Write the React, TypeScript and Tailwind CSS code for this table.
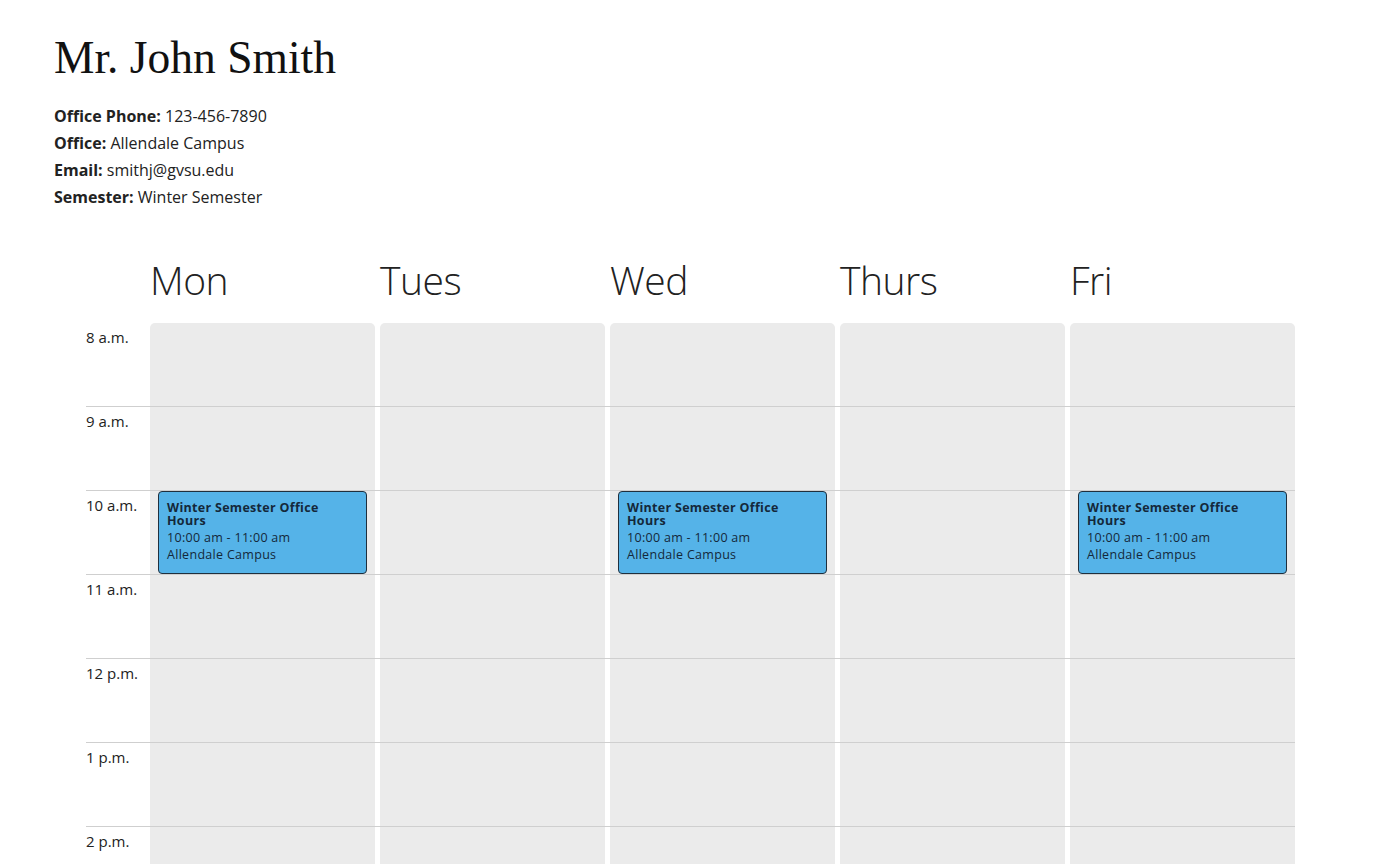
import React from 'react';

const days = ['Mon', 'Tues', 'Wed', 'Thurs', 'Fri'];
const hours = ['8 a.m.', '9 a.m.', '10 a.m.', '11 a.m.', '12 p.m.', '1 p.m.', '2 p.m.'];

// office hours: day index -> hour index
const events = [
  { day: 0, hour: 2 },
  { day: 2, hour: 2 },
  { day: 4, hour: 2 },
];

const EventCard = () => (
  <div className="h-full rounded-[4px] border border-[#1f2f3d] bg-[#55b3e8] px-2 pt-[9px] text-[#14283a]">
    <p className="text-[12.5px] font-bold leading-[13px] tracking-[0.3px]">Winter Semester Office Hours</p>
    <p className="mt-[2px] text-[12.5px] leading-[17px] tracking-[0.3px]">10:00 am - 11:00 am</p>
    <p className="text-[12.5px] leading-[17px] tracking-[0.3px]">Allendale Campus</p>
  </div>
);

export default function App() {
  return (
    <div className="min-h-screen bg-white text-[#222] font-['Open_Sans',sans-serif]">
      <div className="px-[54px] pt-[30px]">
        <h1 className="text-[45.5px] leading-[56px] text-[#111] font-['Liberation_Serif',serif]">Mr. John Smith</h1>
        <div className="mt-[17px] text-[16px] leading-[27px]">
          <p><b>Office Phone:</b> 123-456-7890</p>
          <p><b>Office:</b> Allendale Campus</p>
          <p><b>Email:</b> smithj@gvsu.edu</p>
          <p><b>Semester:</b> Winter Semester</p>
        </div>
      </div>

      <div className="ml-[86px] mt-[37px] w-[1209px]">
        <div className="grid grid-cols-[59px_repeat(5,225px)] gap-x-[5px]">
          <div />
          {days.map(d => (
            <div key={d} className="text-[39px] font-light leading-[64px] tracking-[-0.5px] text-[#222]">{d}</div>
          ))}
        </div>

        <div className="mt-[10px]">
          {hours.map((h, hi) => (
            <div
              key={h}
              className={`grid h-[84px] grid-cols-[59px_repeat(5,225px)] gap-x-[5px] border-t ${hi === 0 ? 'border-transparent' : 'border-[#cfcfcf]'}`}
            >
              <div className="pt-[3px] text-[15px] leading-[22px] text-[#222]">{h}</div>
              {days.map((d, di) => {
                const hasEvent = events.some(e => e.day === di && e.hour === hi);
                return (
                  <div key={d} className={`bg-[#ebebeb] px-2 ${hi === 0 ? 'rounded-t-[5px]' : ''}`}>
                    {hasEvent && <EventCard />}
                  </div>
                );
              })}
            </div>
          ))}
        </div>
      </div>
    </div>
  );
}
